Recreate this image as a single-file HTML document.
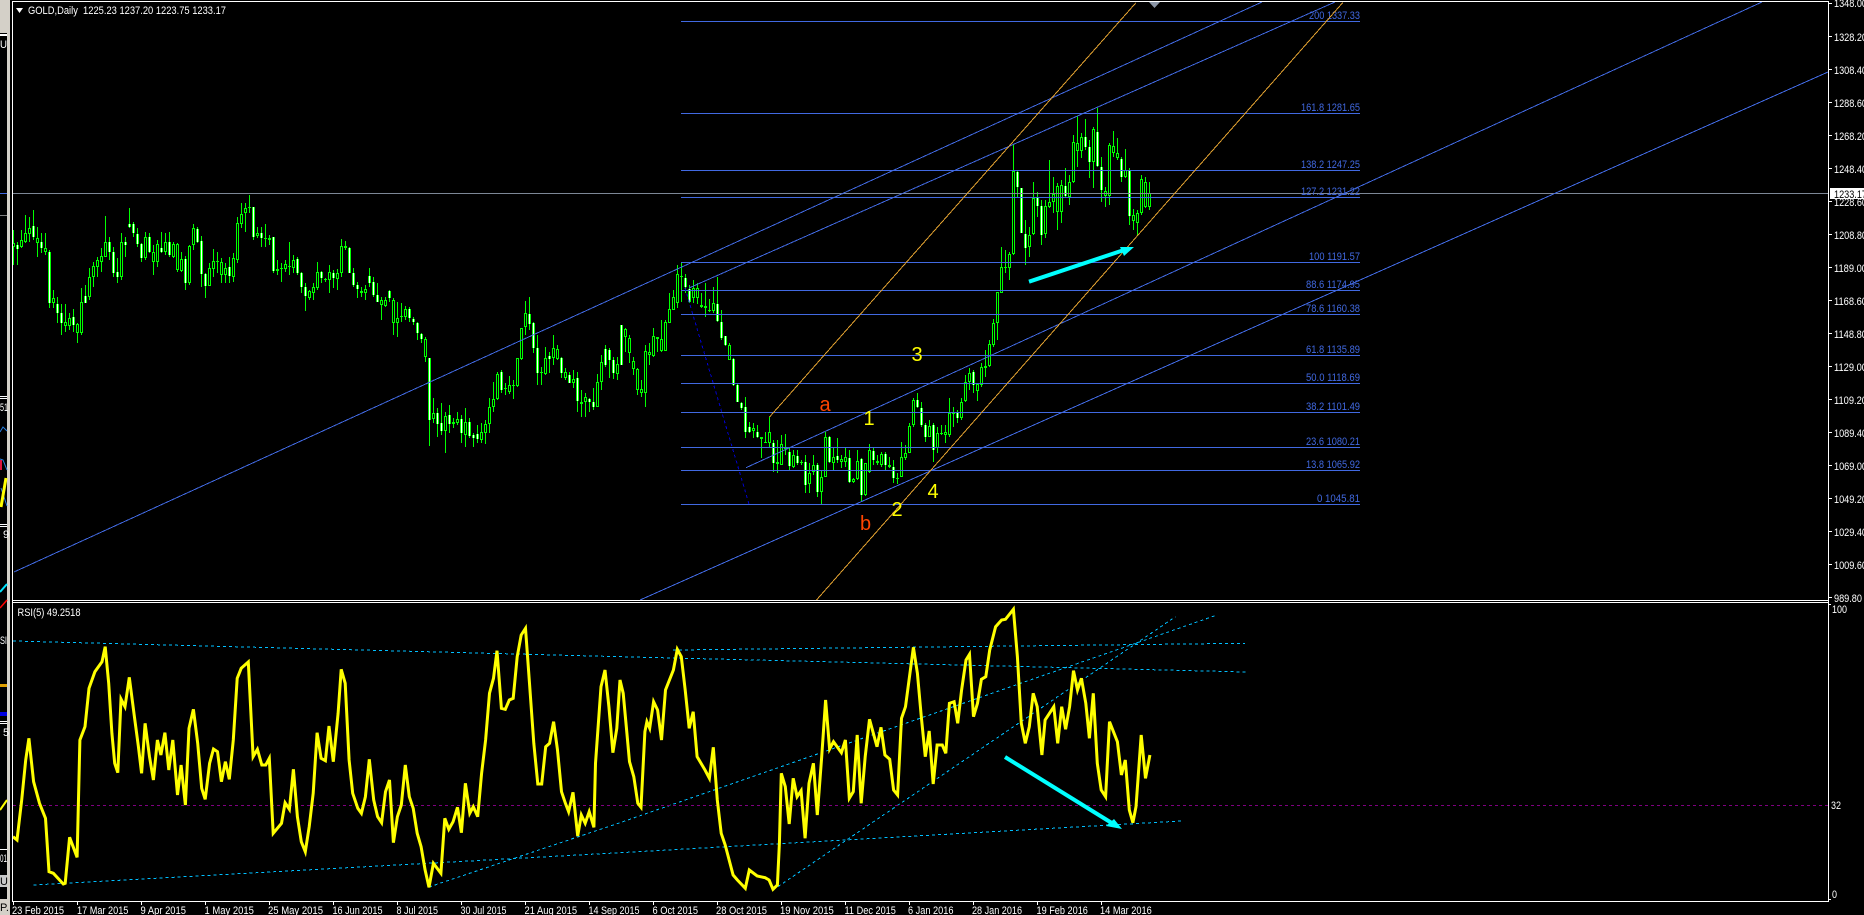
<!DOCTYPE html>
<html><head><meta charset="utf-8"><title>GOLD,Daily</title>
<style>
html,body{margin:0;padding:0;background:#000;width:1864px;height:915px;overflow:hidden}
svg{display:block;position:absolute;left:0;top:0}
text{font-family:"Liberation Sans",sans-serif;font-size:11px;fill:#fff}
.f text{fill:#4169e1}
.big text{font-size:20px}
</style></head><body>
<svg id="s" width="1864" height="915" viewBox="0 0 1864 915" xmlns="http://www.w3.org/2000/svg">
<rect width="1864" height="915" fill="#000"/>
<!-- left strip -->
<g shape-rendering="crispEdges">
<rect x="0" y="0" width="8" height="33" fill="#d4d0c8"/>
<rect x="0" y="34" width="8" height="2" fill="#fff"/>
<rect x="0" y="193" width="8" height="1" fill="#4169e1"/>
<rect x="0" y="215" width="8" height="1" fill="#808080"/>
<rect x="0" y="396" width="8" height="1" fill="#fff"/>
<rect x="0" y="398" width="8" height="1" fill="#fff"/>
<rect x="0" y="460" width="2" height="10" fill="#dc143c"/>
<rect x="0" y="524" width="8" height="1" fill="#fff"/>
<rect x="0" y="526" width="8" height="1" fill="#fff"/>
<rect x="0" y="684" width="7" height="3" fill="#e0a000"/>
<rect x="0" y="712" width="7" height="4" fill="#0000e0"/>
<rect x="0" y="721" width="8" height="1" fill="#fff"/>
<rect x="0" y="723" width="8" height="1" fill="#fff"/>
<rect x="0" y="849" width="8" height="1" fill="#fff"/>
<rect x="0" y="875" width="8" height="12" fill="#c8c8c8"/>
<rect x="0" y="899" width="8" height="16" fill="#d4d0c8"/>
<rect x="7" y="0" width="3" height="915" fill="#d4d0c8"/>
<rect x="10" y="0" width="2" height="915" fill="#000"/>
</g>
<path d="M0 432L3 427L7 431M0 459L3 460L7 470M1 488L7 506" stroke="#2a80e0" fill="none"/>
<path d="M1 507L6 478" stroke="#ffff00" stroke-width="3" fill="none"/>
<path d="M0 608L7 600" stroke="#ff0000" stroke-width="1.5" fill="none"/>
<path d="M0 810L7 800" stroke="#ffff00" stroke-width="2" fill="none"/>
<path d="M0 592L7 584" stroke="#00e5ff" stroke-width="2" fill="none"/>
<text x="0" y="411" textLength="8" lengthAdjust="spacingAndGlyphs">51</text>
<text x="3" y="538">9</text>
<text x="0" y="644" textLength="7" lengthAdjust="spacingAndGlyphs">SI</text>
<text x="3" y="736">5</text>
<text x="0" y="862" textLength="7" lengthAdjust="spacingAndGlyphs">01</text>
<text x="0" y="48" textLength="7" lengthAdjust="spacingAndGlyphs">U</text>
<text x="0" y="885" style="fill:#000">U</text>
<text x="0" y="911" style="fill:#000">P.</text>

<g id="c" shape-rendering="crispEdges"></g>

<!-- price line -->
<rect x="13" y="193" width="1815" height="1" fill="#7d8796" shape-rendering="crispEdges"/>

<!-- fibo -->
<g stroke="#4169e1" stroke-width="1" shape-rendering="crispEdges">
<path d="M681 21.5H1360M681 113.5H1360M681 170.5H1360M681 197.5H1360M681 262.5H1360M681 290.5H1360M681 314.5H1360M681 355.5H1360M681 383.5H1360M681 412.5H1360M681 447.5H1360M681 470.5H1360M681 504.5H1360"/>
</g>
<g class="f" text-anchor="start">
<text x="1309" y="19" textLength="51" lengthAdjust="spacingAndGlyphs">200 1337.33</text>
<text x="1301" y="111" textLength="59" lengthAdjust="spacingAndGlyphs">161.8 1281.65</text>
<text x="1301" y="168" textLength="59" lengthAdjust="spacingAndGlyphs">138.2 1247.25</text>
<text x="1301" y="195" textLength="59" lengthAdjust="spacingAndGlyphs">127.2 1231.22</text>
<text x="1309" y="260" textLength="51" lengthAdjust="spacingAndGlyphs">100 1191.57</text>
<text x="1306" y="288" textLength="54" lengthAdjust="spacingAndGlyphs">88.6 1174.95</text>
<text x="1306" y="312" textLength="54" lengthAdjust="spacingAndGlyphs">78.6 1160.38</text>
<text x="1306" y="353" textLength="54" lengthAdjust="spacingAndGlyphs">61.8 1135.89</text>
<text x="1306" y="381" textLength="54" lengthAdjust="spacingAndGlyphs">50.0 1118.69</text>
<text x="1306" y="410" textLength="54" lengthAdjust="spacingAndGlyphs">38.2 1101.49</text>
<text x="1306" y="445" textLength="54" lengthAdjust="spacingAndGlyphs">23.6 1080.21</text>
<text x="1306" y="468" textLength="54" lengthAdjust="spacingAndGlyphs">13.8 1065.92</text>
<text x="1317" y="502" textLength="43" lengthAdjust="spacingAndGlyphs">0 1045.81</text>
</g>

<!-- channels -->
<g fill="none" stroke-width="1" shape-rendering="crispEdges">
<path d="M14 572L1262 2M689 288L1335 2M746 467.7L1762 2M640 600L1828 72" stroke="#4169e1"/>
<path d="M769.5 417L1136 2.7M816.5 600L1342.7 2.7" stroke="#e0a030"/>
<path d="M685 288L749 504" stroke="#0000cd" stroke-dasharray="3 3"/>
</g>
<path d="M1149 2h11l-5.5 6z" fill="#8a95a5"/>

<!-- wave labels -->
<g class="big" text-anchor="middle">
<text x="825" y="411" style="fill:#ff4500">a</text>
<text x="865.5" y="530" style="fill:#ff4500">b</text>
<text x="869" y="425" style="fill:#ffff00">1</text>
<text x="897" y="516" style="fill:#ffff00">2</text>
<text x="917" y="361" style="fill:#ffff00">3</text>
<text x="933" y="498" style="fill:#ffff00">4</text>
</g>

<!-- arrow 1 -->
<path d="M1029 281.7L1124 250" stroke="#00ffff" stroke-width="4" fill="none"/>
<path d="M1120 247L1134 247L1124 256z" fill="#00ffff"/>

<!-- RSI -->
<g fill="none" stroke="#00bfff" stroke-width="1" stroke-dasharray="3 3" shape-rendering="crispEdges">
<path d="M13 641L620 656.7L1246 672"/>
<path d="M673 650L1245 643.3"/>
<path d="M33.6 885L620 852.7L1181.5 821"/>
<path d="M429 887L620 822.7L1217 615"/>
<path d="M773 890L1175.5 616.7"/>
</g>
<path d="M13 805.5H1828" stroke="#800080" stroke-dasharray="3 3" fill="none" shape-rendering="crispEdges"/>
<polyline id="rsi" fill="none" stroke="#ffff00" stroke-width="3" stroke-linejoin="miter"/>

<!-- arrow 2 -->
<path d="M1005 757L1115 825" stroke="#00ffff" stroke-width="4" fill="none"/>
<path d="M1114 819L1122 829L1106 826z" fill="#00ffff"/>

<!-- frame -->
<g fill="#fff" shape-rendering="crispEdges">
<rect x="12" y="1" width="1817" height="1"/>
<rect x="12" y="1" width="1" height="901"/>
<rect x="12" y="600" width="1817" height="1"/>
<rect x="12" y="602" width="1817" height="1"/>
<rect x="12" y="901" width="1817" height="1"/>
<rect x="1828" y="1" width="1" height="901"/>
<path d="M1829 3h3v1h-3zM1829 36h3v1h-3zM1829 69h3v1h-3zM1829 102h3v1h-3zM1829 135h3v1h-3zM1829 168h3v1h-3zM1829 201h3v1h-3zM1829 234h3v1h-3zM1829 267h3v1h-3zM1829 300h3v1h-3zM1829 333h3v1h-3zM1829 366h3v1h-3zM1829 399h3v1h-3zM1829 432h3v1h-3zM1829 465h3v1h-3zM1829 498h3v1h-3zM1829 531h3v1h-3zM1829 564h3v1h-3zM1829 597h3v1h-3z"/>
<path d="M13 902h1v3h-1zM77 902h1v3h-1zM141 902h1v3h-1zM205 902h1v3h-1zM269 902h1v3h-1zM333 902h1v3h-1zM397 902h1v3h-1zM461 902h1v3h-1zM525 902h1v3h-1zM589 902h1v3h-1zM653 902h1v3h-1zM717 902h1v3h-1zM781 902h1v3h-1zM845 902h1v3h-1zM909 902h1v3h-1zM973 902h1v3h-1zM1037 902h1v3h-1zM1101 902h1v3h-1z"/>
<path d="M1829 604h2v1h-2zM1829 899h2v1h-2z"/>
</g>

<!-- header -->
<path d="M16 8h7l-3.5 5z" fill="#fff"/>
<text x="28" y="14" textLength="198" lengthAdjust="spacingAndGlyphs" xml:space="preserve">GOLD,Daily  1225.23 1237.20 1223.75 1233.17</text>
<text x="17.5" y="616" textLength="63" lengthAdjust="spacingAndGlyphs">RSI(5) 49.2518</text>

<!-- price axis -->
<g>
<text x="1834" y="7" textLength="33" lengthAdjust="spacingAndGlyphs">1348.00</text>
<text x="1834" y="41" textLength="33" lengthAdjust="spacingAndGlyphs">1328.20</text>
<text x="1834" y="74" textLength="33" lengthAdjust="spacingAndGlyphs">1308.40</text>
<text x="1834" y="107" textLength="33" lengthAdjust="spacingAndGlyphs">1288.60</text>
<text x="1834" y="140" textLength="33" lengthAdjust="spacingAndGlyphs">1268.20</text>
<text x="1834" y="173" textLength="33" lengthAdjust="spacingAndGlyphs">1248.40</text>
<text x="1834" y="206" textLength="33" lengthAdjust="spacingAndGlyphs">1228.60</text>
<text x="1834" y="239" textLength="33" lengthAdjust="spacingAndGlyphs">1208.80</text>
<text x="1834" y="272" textLength="33" lengthAdjust="spacingAndGlyphs">1189.00</text>
<text x="1834" y="305" textLength="33" lengthAdjust="spacingAndGlyphs">1168.60</text>
<text x="1834" y="338" textLength="33" lengthAdjust="spacingAndGlyphs">1148.80</text>
<text x="1834" y="371" textLength="33" lengthAdjust="spacingAndGlyphs">1129.00</text>
<text x="1834" y="404" textLength="33" lengthAdjust="spacingAndGlyphs">1109.20</text>
<text x="1834" y="437" textLength="33" lengthAdjust="spacingAndGlyphs">1089.40</text>
<text x="1834" y="470" textLength="33" lengthAdjust="spacingAndGlyphs">1069.00</text>
<text x="1834" y="503" textLength="33" lengthAdjust="spacingAndGlyphs">1049.20</text>
<text x="1834" y="536" textLength="33" lengthAdjust="spacingAndGlyphs">1029.40</text>
<text x="1834" y="569" textLength="33" lengthAdjust="spacingAndGlyphs">1009.60</text>
<text x="1834" y="602" textLength="28" lengthAdjust="spacingAndGlyphs">989.80</text>
</g>
<rect x="1830" y="188" width="34" height="11" fill="#fff" shape-rendering="crispEdges"/>
<text x="1834" y="198" textLength="33" lengthAdjust="spacingAndGlyphs" style="fill:#000">1233.17</text>
<text x="1832" y="613" textLength="15" lengthAdjust="spacingAndGlyphs">100</text>
<text x="1831" y="809" textLength="10" lengthAdjust="spacingAndGlyphs">32</text>
<text x="1832" y="898" textLength="5" lengthAdjust="spacingAndGlyphs">0</text>

<!-- time axis -->
<g>
<text x="12" y="914" textLength="52" lengthAdjust="spacingAndGlyphs">23 Feb 2015</text>
<text x="77" y="914" textLength="51.4" lengthAdjust="spacingAndGlyphs">17 Mar 2015</text>
<text x="140.5" y="914" textLength="45.5" lengthAdjust="spacingAndGlyphs">9 Apr 2015</text>
<text x="204.5" y="914" textLength="49.4" lengthAdjust="spacingAndGlyphs">1 May 2015</text>
<text x="268" y="914" textLength="55" lengthAdjust="spacingAndGlyphs">25 May 2015</text>
<text x="332.5" y="914" textLength="50" lengthAdjust="spacingAndGlyphs">16 Jun 2015</text>
<text x="396.5" y="914" textLength="41.5" lengthAdjust="spacingAndGlyphs">8 Jul 2015</text>
<text x="460.5" y="914" textLength="46" lengthAdjust="spacingAndGlyphs">30 Jul 2015</text>
<text x="524.5" y="914" textLength="52.6" lengthAdjust="spacingAndGlyphs">21 Aug 2015</text>
<text x="588.5" y="914" textLength="51" lengthAdjust="spacingAndGlyphs">14 Sep 2015</text>
<text x="652.5" y="914" textLength="45.5" lengthAdjust="spacingAndGlyphs">6 Oct 2015</text>
<text x="716" y="914" textLength="51" lengthAdjust="spacingAndGlyphs">28 Oct 2015</text>
<text x="780" y="914" textLength="53.8" lengthAdjust="spacingAndGlyphs">19 Nov 2015</text>
<text x="844.5" y="914" textLength="51.4" lengthAdjust="spacingAndGlyphs">11 Dec 2015</text>
<text x="908" y="914" textLength="45.5" lengthAdjust="spacingAndGlyphs">6 Jan 2016</text>
<text x="972" y="914" textLength="50" lengthAdjust="spacingAndGlyphs">28 Jan 2016</text>
<text x="1036.5" y="914" textLength="51.4" lengthAdjust="spacingAndGlyphs">19 Feb 2016</text>
<text x="1100" y="914" textLength="51.8" lengthAdjust="spacingAndGlyphs">14 Mar 2016</text>
</g>
</svg>
<script>
(function(){
var G=[[0,0,"690 795 730 740;725 795 735 748 1;690 745 720 742;645 730 700 725;650 725 683 703;630 720 678 712 1;680 770 715 730;700 760 727 745 1;700 765 745 755;750 925 755 910 1;870 925 895 910;890 970 912 938 1;912 1005 938 970 1;912 995 965 978;938 990 955 978;928 995 950 975 1;970 1030 972 1000;865 1005 907 1000;855 910 888 910 1;805 900 830 890;785 860 798 830;770 830 780 800;745 815 768 785;648 770 725 770;710 780 727 755 1;740 830 755 818 1;775 850 817 830 1;700 840 727 830;710 770 727 735 1;625 685 673 680 1;665 710 673 700 1;685 740 703 733 1;730 785 733 773 1;695 780 710 775;700 760 712 755 1;735 825 755 785;720 800 733 785;695 760 743 755 1;700 765 727 755;695 770 725 765 1;725 775 733 770;730 815 733 810;755 815 778 812;768 870 778 850 1;735 855 737 850;672 750 685 735;680 730 688 725 1;708 860 722 822 1;820 895 823 858 1;790 857 805 857;748 830 782 806;755 820 782 787 1;775 850 787 825;790 850 805 825;770 850 800 828 1;760 845 775 830;650 790 668 780;610 685 643 672;610 695 625 640;585 640 620 625 1;620 720 620 710 1;680 715 698 708;680 740 700 715 1;672 740 713 717;705 735 713 720;710 820 710 812 1;780 825 808 812;790 845 805 808;780 815 793 808;725 825 798 800;765 820 780 803;772 825 778 820 1;815 880 820 862 1;850 932 862 888 1;870 900 872 895;850 900 862 878;785 870 817 865;812 850 817 835 1;835 845 838 840;795 880 815 840;810 865 818 835 1;808 870 820 838;717 830 738 820;722 750 738 745;742 820 745 818 1;805 860 820 855 1;845 895 855 868 1;860 890 872 880 1;855 900 868 880;805 860 827 848 1;830 890 845 885 1;850 905 885 905 1;890 960 900 915;890 920 900 918;870 905 872 895 1"],
[95,300,"-5 105 0 70;5 110 55 70;8 65 48 52;18 60 28 50;22 65 28 55 1;50 75 57 65 1;65 120 70 98 1;98 130 103 118 1;112 185 118 172;175 438 175 360 1;295 370 338 357;325 410 338 372 1;310 405 370 392 1;335 458 348 392;315 400 346 372 1;355 385 365 372;335 375 358 368;345 430 358 400 1;325 442 365 405;355 415 365 408 1;400 440 405 415 1;375 428 403 418 1;370 430 395 420;360 432 372 398;295 400 322 372;245 335 298 322;215 300 222 298;210 280 217 270 1;250 285 265 268;228 282 255 275;240 298 255 258;175 262 175 258;85 180 85 178;3 105 40 80;-10 90 42 72 1;65 160 68 143 1;105 255 145 218 1;200 255 215 220;140 225 175 222;155 220 168 178 1;105 195 145 175;135 180 147 178;170 235 175 218 1;205 240 217 235;215 250 225 248 1;210 265 237 250;215 335 235 303 1;270 350 305 312;280 350 290 305;295 335 298 305 1;265 330 305 320 1;222 322 247 320;165 270 187 247;135 200 148 195 1;145 235 150 180 1;170 238 180 220 1;170 240 192 222"],
[152,300,"75 195 75 195 1;85 155 88 112;105 190 115 160;170 225 183 208;205 285 208 270;240 290 268 278;135 320 153 280;130 195 157 165;85 170 108 168;110 155 112 118;60 155 118 152;60 150 65 152;-20 70 28 70;-30 30 -10 30;-105 25 -78 10;-110 5 -72 -68 1;-78 -20 -65 -40 1;-45 8 -32 5 1;-60 8 -35 -5;-50 12 -35 -5;-20 25 15 20;-52 50 18 25;-3 35 30 33;-40 40 8 32;-70 65 12 62 1;30 120 65 115 1;108 138 108 135 1;128 180 135 180;175 258 178 255 1;250 305 255 305 1;305 330 308 325 1;290 415 322 395 1;365 400 382 395 1;370 415 385 392;375 415 397 412 1;410 475 412 418 1;395 430 425 427;352 445 397 430;420 515 428 490 1;420 520 487 492 1;405 495 433 495;403 465 445 447;440 510 455 498 1;450 505 465 500;450 495 467 490 1;480 495 485 490;465 578 485 555 1;490 580 520 553;465 525 495 515;490 590 495 575 1;510 612 532 575;395 530 412 530;408 490 412 485 1;445 510 470 490;415 490 468 480 1;465 505 478 485;445 500 470 485;450 550 475 545 1;535 550 538 545;450 540 482 538;475 605 478 585 1;490 588 490 585;432 520 450 515;440 495 452 480 1;465 495 482 490;455 500 462 495;455 510 462 495 1;470 505 495 500;480 550 500 535 1;520 553 535 538;425 530 470 530;435 480 458 475;370 460 378 458;295 380 300 375;280 325 300 322 1;305 380 325 375 1;370 425 375 412 1;360 410 378 412;370 485 375 450 1;380 460 400 445;375 405 398 400;375 430 397 405;295 410 340 405;320 382 338 340;330 370 340 355 1;295 360 305 355;225 305 245 303;205 270 220 245;210 280 215 255 1;250 302 252 272;190 260 200 255;150 230 198 205;120 200 133 198;58 140 68 135"],
[246,0,"875 1020 877 970;740 880 802 878;750 820 802 803;755 840 763 803;435 765 513 762;510 590 517 560 1;565 700 565 700 1;660 795 703 745 1;680 770 705 742;545 705 595 703;575 650 595 617 1;600 735 618 705 1;600 715 618 703;480 625 605 622;530 640 582 605;550 690 558 635;540 670 555 635;505 590 558 587 1;525 615 547 590;405 550 427 547;348 500 430 452;400 475 412 452;358 450 412 442 1;420 535 442 485 1;380 565 388 485;325 500 395 497 1;470 605 500 570 1;560 620 572 588;430 615 435 587;393 470 438 460;415 480 460 473;470 545 478 530 1;448 535 510 530;503 675 510 648 1;628 690 645 662;630 705 640 668;525 645 538 640;530 625 545 622;545 630 580 622"]];
var g="",w="",b="";
G.forEach(function(a){
 a[2].split(";").forEach(function(r,k){
  var v=r.split(" ").map(Number),x=13+4*(a[0]+k),off=a[1];
  var h=Math.round(off+v[0]/3),l=Math.round(off+v[1]/3),t=Math.round(off+v[2]/3),o=Math.round(off+v[3]/3);
  if(o<=t)o=t+1;
  g+="M"+x+" "+h+"h1V"+l+"h-1z";
  g+="M"+(x-1)+" "+t+"h3V"+o+"h-3z";
  if(o-t>=3){var s="M"+x+" "+(v[4]?t:t+1)+"h1V"+(v[4]?o:o-1)+"h-1z";if(v[4])w+=s;else b+=s;}
 });
});
var c=document.getElementById("c"),NS="http://www.w3.org/2000/svg";
[[g,"#00ff00"],[b,"#000"],[w,"#fff"]].forEach(function(p){var e=document.createElementNS(NS,"path");e.setAttribute("d",p[0]);e.setAttribute("fill",p[1]);c.appendChild(e);});
var Z6=[33,710,43,720,55,600,65,480,73,415,85,545,100,610,115,655,124,815,135,820,160,852,165,850,176,712,195,772,202,420,215,380,225,265,240,215,258,185,266,140,275,250,283,400,290,490,298,518,306,297,316,320,327,232,340,350,350,440,358,520,367,370,378,470,388,540,398,420,407,465,417,398,427,510,437,420,449,585,458,495,469,615,478,385,489,328,500,430,510,565,519,598,530,490,540,447,550,455,560,545,570,485,580,538,590,420,600,235,610,205,628,186,632,280,640,470,651,448,662,495,672,495,681,475,691,700,712,670,721,608,732,628,742,508,752,650,762,725,772,755,782,680,792,580,802,398,812,475,823,482,832,378,843,485,855,340,863,208,873,250,883,480,892,580,905,625,914,640,924,590,934,478,945,600,955,650,965,668,975,575,985,540,995,728,1005,650,1015,615,1025,495,1035,590,1045,625,1055,700,1065,740,1075,810,1085,862,1096,790,1115,820,1125,655,1135,688,1146,665,1157,622,1167,698,1177,550,1188,640,1197,620,1208,650,1218,520,1228,420,1238,280,1248,235,1257,152,1268,325,1278,328,1288,300,1298,295,1308,170,1318,105,1329,85,1339,250,1350,430,1360,552,1370,552,1380,440,1390,430,1400,365,1410,450,1420,575,1430,610,1438,635,1449,577,1461,708,1470,645,1480,670,1490,635,1502,682,1506,490,1520,260,1530,210,1540,320,1550,458,1560,385,1568,240];
var Z7=[8,280,16,380,24,485,35,530,45,610,53,622,63,395,68,365,75,385,85,305,95,330,105,420,115,270,135,210,145,148,155,170,165,270,175,385,185,335,195,470,215,510,226,535,236,442,246,600,256,700,266,735,286,825,297,840,317,865,327,810,347,828,367,833,377,840,387,868,398,855,403,730,408,520,418,560,428,672,438,535,448,590,458,572,468,715,478,550,489,490,499,645,510,470,520,300,530,447,540,425,560,458,570,420,580,595,590,575,600,405,610,610,620,470,631,358,650,440,660,382,670,465,682,478,692,570,702,585,712,355,722,320,742,142,752,220,762,350,772,470,782,393,792,552,802,435,815,435,824,460,833,310,845,305,854,370,864,270,875,180,884,163,894,350,904,310,914,238,925,230,935,150,950,80,965,60,975,58,995,28,1005,170,1015,370,1025,430,1035,380,1045,280,1055,320,1067,465,1075,360,1097,320,1107,430,1117,320,1127,388,1137,320,1147,212,1157,270,1167,235,1178,310,1187,415,1197,280,1207,490,1217,570,1228,590,1238,365,1258,425,1268,525,1278,480,1288,630,1297,668,1305,620,1318,405,1329,535,1340,465];
var pts=[],i;
for(i=0;i<Z6.length;i+=2)pts.push((Z6[i]/2.529).toFixed(1)+","+(600+Z6[i+1]/3).toFixed(1));
for(i=0;i<Z7.length;i+=2)pts.push((620+Z7[i]/2.529).toFixed(1)+","+(600+Z7[i+1]/3).toFixed(1));
document.getElementById("rsi").setAttribute("points",pts.join(" "));
})();
</script>
</body></html>
